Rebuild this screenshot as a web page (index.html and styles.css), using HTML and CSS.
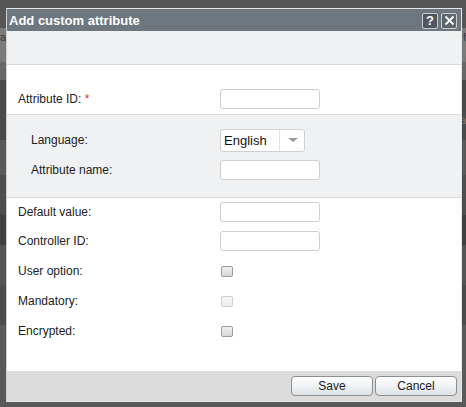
FILE: index.html
```html
<!DOCTYPE html>
<html>
<head>
<meta charset="utf-8">
<link rel="stylesheet" href="styles.css">
</head>
<body>
<div class="backdrop">
  <div class="band b1"></div>
  <div class="band b2"><span class="ghost gl">a</span><span class="ghost gr">f</span></div>
  <div class="band b3"></div>
  <div class="band b4"><span class="ghost gr2">a</span></div>
  <div class="band b5"></div>
  <div class="band b6"></div>
  <div class="band b7"></div>
  <div class="band b8"></div>
  <div class="band b9"></div>
  <div class="band b10"></div>
</div>

<div class="dialog">
  <div class="titlebar">
    <span class="title">Add custom attribute</span>
    <div class="tools">
      <span class="tbtn help">?</span>
      <span class="tbtn close">
        <svg width="11" height="11" viewBox="0 0 11 11"><path d="M1.5 1.5 L9.5 9.5 M9.5 1.5 L1.5 9.5" stroke="#fff" stroke-width="1.8" fill="none"/></svg>
      </span>
    </div>
  </div>
  <div class="toolbar"></div>

  <div class="section s1">
    <div class="row r-id">
      <label class="lbl">Attribute ID: <span class="req">*</span></label>
      <input class="txt" type="text">
    </div>
  </div>

  <div class="section s2">
    <div class="row">
      <label class="lbl sub">Language:</label>
      <div class="select"><span class="sel-text">English</span><span class="sel-arrow"></span></div>
    </div>
    <div class="row">
      <label class="lbl sub">Attribute name:</label>
      <input class="txt" type="text">
    </div>
  </div>

  <div class="section s3">
    <div class="row first">
      <label class="lbl">Default value:</label>
      <input class="txt" type="text">
    </div>
    <div class="row">
      <label class="lbl">Controller ID:</label>
      <input class="txt" type="text">
    </div>
    <div class="row">
      <label class="lbl">User option:</label>
      <span class="chk"></span>
    </div>
    <div class="row">
      <label class="lbl">Mandatory:</label>
      <span class="chk disabled"></span>
    </div>
    <div class="row">
      <label class="lbl">Encrypted:</label>
      <span class="chk"></span>
    </div>
  </div>

  <div class="footer">
    <button class="btn">Save</button>
    <button class="btn">Cancel</button>
  </div>
</div>
</body>
</html>
```

FILE: styles.css
```css
html, body {
  margin: 0;
  padding: 0;
}
body {
  width: 466px;
  height: 407px;
  overflow: hidden;
  background: #555555;
  font-family: "Liberation Sans", Arial, sans-serif;
  font-size: 12px;
  color: #222;
  position: relative;
}

.backdrop {
  display: flex;
  flex-direction: column;
}
.band { position: relative; }
.b1 { height: 28px; background: #565656; }
.b2 { height: 34px; background: #7b7b7b; }
.b3 { height: 18px; background: #686868; }
.b4 { height: 60px; background: #4a4a4a; }
.b5 { height: 35px; background: #595959; }
.b6 { height: 40px; background: #4e4e4e; }
.b7 { height: 30px; background: #404040; }
.b8 { height: 40px; background: #545454; }
.b9 { height: 40px; background: #4c4c4c; }
.b10 { height: 82px; background: #595959; }

.ghost {
  position: absolute;
  font-size: 11px;
  color: #3a3a3a;
}
.gl { left: 0; top: 3px; }
.gr { right: 0; top: 3px; }
.gr2 { right: 0; top: 34px; color: #777; }

.dialog {
  position: absolute;
  left: 6px;
  top: 8px;
  width: 454px;
  height: 392px;
  border: 1px solid #e6e6e6;
  border-left-color: #cfcfcf;
  background: #fff;
  display: flex;
  flex-direction: column;
}

.titlebar {
  height: 22px;
  flex: 0 0 22px;
  background: #6c777f;
  display: flex;
  align-items: center;
  justify-content: space-between;
  padding: 0 4px 0 2px;
}
.title {
  color: #fff;
  font-weight: bold;
  font-size: 13px;
}
.tools {
  display: flex;
  gap: 3px;
  margin-top: 1px;
}
.tbtn {
  width: 14px;
  height: 14px;
  border: 1px solid #c9cdd0;
  border-radius: 2px;
  background: #4f585e;
  color: #fff;
  font-weight: bold;
  font-size: 13px;
  line-height: 14px;
  text-align: center;
  display: flex;
  align-items: center;
  justify-content: center;
}
.tbtn.close { background: #5c666c; }

.toolbar {
  height: 33px;
  flex: 0 0 33px;
  background: #f0f1f3;
  border-bottom: 1px solid #d9dadc;
}

.section {
  display: flex;
  flex-direction: column;
}
.s1 {
  padding-top: 18px;
  height: 31px;
  border-bottom: 1px solid #dcdcdc;
}
.s2 {
  background: #f0f1f3;
  padding-top: 10px;
  height: 72px;
  border-bottom: 1px solid #d9d9d9;
}
.s3 {
  flex: 1;
}

.row {
  height: 30px;
  display: flex;
  align-items: center;
  padding-left: 11px;
}
.s1 .row { padding-top: 2px; box-sizing: border-box; }
.s3 .row.first { height: 28px; }

.lbl {
  width: 202px;
  flex: 0 0 202px;
  color: #222;
}
.lbl.sub {
  padding-left: 13px;
  width: 189px;
  flex: 0 0 189px;
}
.req { color: #d9363e; }

.txt {
  box-sizing: border-box;
  width: 100px;
  height: 20px;
  margin: 0;
  padding: 0 4px;
  border: 1px solid #cfcfcf;
  border-radius: 3px;
  background: #fff;
  font-family: inherit;
  font-size: 12px;
}

.select {
  box-sizing: border-box;
  width: 85px;
  height: 23px;
  border: 1px solid #d0d0d0;
  border-radius: 3px;
  background: #fff;
  display: flex;
  align-items: center;
}
.sel-text {
  flex: 0 0 59px;
  padding-left: 3px;
  box-sizing: border-box;
  font-size: 13px;
  color: #111;
  height: 21px;
  line-height: 21px;
  border-right: 1px solid #e2e2e2;
}
.sel-arrow {
  flex: 1;
  height: 21px;
  display: flex;
  align-items: center;
  justify-content: center;
}
.sel-arrow::after {
  content: "";
  width: 0;
  height: 0;
  border-left: 5px solid transparent;
  border-right: 5px solid transparent;
  border-top: 4px solid #999;
  margin-left: 2px;
}

.chk {
  box-sizing: border-box;
  width: 12px;
  height: 11px;
  margin-left: 1px;
  border: 1px solid #9b9b9b;
  border-radius: 2px;
  background: linear-gradient(#f0f0f0, #d8d8d8);
}
.chk.disabled {
  border-color: #cfcfcf;
  background: linear-gradient(#f6f6f6, #ececec);
}

.footer {
  height: 30px;
  flex: 0 0 30px;
  background: #dcdcdc;
  display: flex;
  justify-content: flex-end;
  align-items: flex-start;
  padding: 5px 4px 0 0;
  box-sizing: border-box;
  gap: 2px;
}
.btn {
  box-sizing: border-box;
  width: 82px;
  height: 20px;
  margin: 0;
  padding: 0;
  border: 1px solid #8e8e8e;
  border-radius: 4px;
  background: linear-gradient(#ffffff, #f2f4f6 45%, #dde2e7);
  font-family: "Liberation Sans", Arial, sans-serif;
  font-size: 12px;
  color: #222;
}
```
